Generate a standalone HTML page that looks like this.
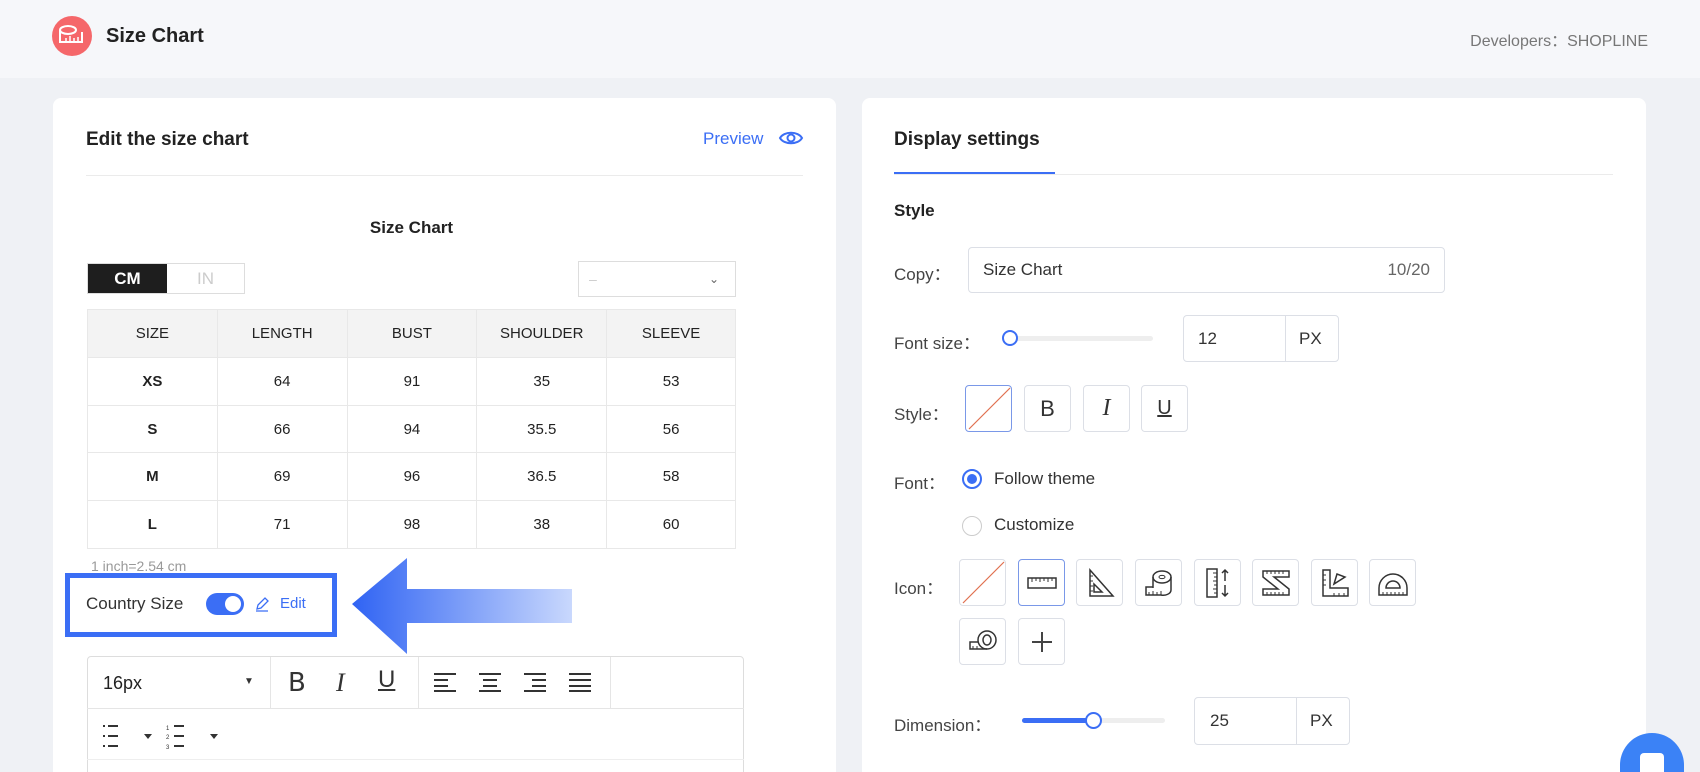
<!DOCTYPE html>
<html style="width:1700px;height:772px;overflow:hidden"><head><meta charset="utf-8"><style>
*{box-sizing:border-box;margin:0;padding:0}
body{width:1700px;height:772px;overflow:hidden;background:#eff1f5;font-family:"Liberation Sans",sans-serif;color:#333;position:relative}
.a{position:absolute}
.hdr{left:0;top:0;width:1700px;height:78px;background:#f6f7fa}
.card{background:#fff;border-radius:8px 8px 0 0}
.lbl{font-size:17px;color:#444}
.box{border:1px solid #dcdfe6;border-radius:4px;background:#fff}
td,th{border:1px solid #e8e8e8;text-align:center;font-size:15px;color:#222}
th{background:#f3f3f3;font-weight:normal;height:48px}
td{height:47.7px}
table{border-collapse:collapse}
.ib{width:47px;height:47px;border:1px solid #dcdfe6;border-radius:4px;background:#fff;display:flex;align-items:center;justify-content:center}
</style></head><body>
<div class="a hdr"></div>
<svg class="a" style="left:52px;top:16px" width="40" height="40" viewBox="0 0 40 40"><circle cx="20" cy="20" r="20" fill="#f5676a"/><ellipse cx="16" cy="14" rx="8" ry="4" fill="none" stroke="#fff" stroke-width="2"/><path d="M8 14v12h22v-10" fill="none" stroke="#fff" stroke-width="2"/><path d="M14 26v-4M18 26v-6M22 26v-4M26 26v-5" stroke="#fff" stroke-width="1.5"/></svg>
<div class="a" style="left:106px;top:25px;font-size:20px;font-weight:bold;color:#222">Size Chart</div>
<div class="a" style="right:52px;top:27px;font-size:16px;color:#777">Developers：SHOPLINE</div>

<div class="a card" style="left:53px;top:98px;width:783px;height:674px"></div>
<div class="a card" style="left:862px;top:98px;width:784px;height:674px"></div>

<div class="a" style="left:86px;top:129px;font-size:19px;font-weight:bold;color:#222">Edit the size chart</div>
<div class="a" style="left:703px;top:129px;font-size:17px;color:#3b6ef5">Preview</div>
<svg class="a" style="left:778px;top:127px" width="26" height="22" viewBox="0 0 26 22"><path d="M2 11C6 4 20 4 24 11C20 18 6 18 2 11Z" fill="none" stroke="#3b6ef5" stroke-width="2"/><circle cx="13" cy="11" r="3.5" fill="none" stroke="#3b6ef5" stroke-width="2"/></svg>
<div class="a" style="left:86px;top:175px;width:717px;height:1px;background:#ebebeb"></div>
<div class="a" style="left:87px;top:218px;width:649px;text-align:center;font-size:17px;font-weight:bold;color:#222">Size Chart</div>
<div class="a" style="left:87px;top:263px;width:158px;height:31px;border:1px solid #ddd;display:flex;font-size:17px">
<div style="width:79px;background:#1e1e1e;color:#fff;font-weight:bold;text-align:center;line-height:29px">CM</div>
<div style="flex:1;color:#ccc;text-align:center;line-height:29px">IN</div></div>
<div class="a" style="left:578px;top:261px;width:158px;height:36px;border:1px solid #ddd;color:#ccc;font-size:14px;line-height:34px;padding-left:10px">–<span style="position:absolute;right:16px;color:#666;font-size:12px">&#8964;</span></div>
<table class="a" style="left:87px;top:309px;width:649px">
<colgroup><col style="width:130px"><col style="width:130px"><col style="width:130px"><col style="width:130px"><col style="width:129px"></colgroup>
<tr><th>SIZE</th><th>LENGTH</th><th>BUST</th><th>SHOULDER</th><th>SLEEVE</th></tr>
<tr><td><b>XS</b></td><td>64</td><td>91</td><td>35</td><td>53</td></tr>
<tr><td><b>S</b></td><td>66</td><td>94</td><td>35.5</td><td>56</td></tr>
<tr><td><b>M</b></td><td>69</td><td>96</td><td>36.5</td><td>58</td></tr>
<tr><td><b>L</b></td><td>71</td><td>98</td><td>38</td><td>60</td></tr>
</table>
<div class="a" style="left:91px;top:558px;font-size:14px;color:#999">1 inch=2.54 cm</div>
<div class="a" style="left:65px;top:573px;width:272px;height:64px;border:5px solid #3b6ef5;background:#fff"></div>
<div class="a lbl" style="left:86px;top:594px;color:#333">Country Size</div>
<div class="a" style="left:206px;top:593px;width:38px;height:22px;border-radius:11px;background:#3b6ef5"><div style="position:absolute;right:3px;top:3px;width:16px;height:16px;border-radius:50%;background:#fff"></div></div>
<svg class="a" style="left:254px;top:596px" width="16" height="16" viewBox="0 0 16 16"><path d="M3 13L4 9L11 2L14 5L7 12Z M2 15H14" fill="none" stroke="#3b6ef5" stroke-width="1.3"/></svg>
<div class="a" style="left:280px;top:595px;font-size:15px;color:#3b6ef5">Edit</div>
<svg class="a" style="left:350px;top:556px" width="224" height="100" viewBox="0 0 224 100"><defs><linearGradient id="g" x1="0" x2="1"><stop offset="0" stop-color="#2f63f3"/><stop offset="1" stop-color="#c9d8fd"/></linearGradient></defs><path d="M2 48L57 2V33H222V67H57V98Z" fill="url(#g)"/></svg>

<div class="a" style="left:87px;top:656px;width:657px;height:130px;border:1px solid #ddd;border-radius:4px"></div>
<div class="a" style="left:87px;top:708px;width:657px;height:1px;background:#e5e5e5"></div>
<div class="a" style="left:87px;top:759px;width:657px;height:1px;background:#eee"></div>
<div class="a" style="left:270px;top:657px;width:1px;height:51px;background:#e5e5e5"></div>
<div class="a" style="left:418px;top:657px;width:1px;height:51px;background:#e5e5e5"></div>
<div class="a" style="left:610px;top:657px;width:1px;height:51px;background:#e5e5e5"></div>
<div class="a" style="left:103px;top:673px;font-size:18px;color:#222">16px</div>
<div class="a" style="left:244px;top:676px;font-size:10px;color:#333">▼</div>
<div class="a" style="left:288px;top:668px;font-size:26px;color:#333;font-family:'DejaVu Sans',sans-serif">B</div>
<div class="a" style="left:336px;top:668px;font-size:26px;color:#333;font-family:'Liberation Serif',serif;font-style:italic">I</div>
<div class="a" style="left:378px;top:666px;font-size:24px;color:#333;text-decoration:underline">U</div>
<svg class="a" style="left:434px;top:672px" width="170" height="20" viewBox="0 0 170 20"><g stroke="#333" stroke-width="2"><path d="M0 2h22M0 8h14M0 14h14M0 19h22"/><path d="M45 2h22M49 8h14M49 14h14M45 19h22"/><path d="M90 2h22M98 8h14M98 14h14M90 19h22"/><path d="M135 2h22M135 8h22M135 14h22M135 19h22"/></g></svg>
<svg class="a" style="left:102px;top:724px" width="130" height="26" viewBox="0 0 130 26"><g stroke="#333" stroke-width="2"><path d="M6 2h10M6 12h10M6 22h10M1 2h2M1 12h2M1 22h2"/><path d="M72 2h10M72 12h10M72 22h10"/></g><path d="M42 10l4 5 4-5Z M108 10l4 5 4-5Z" fill="#333"/><text x="64" y="6" font-size="6" fill="#333">1</text><text x="64" y="15" font-size="6" fill="#333">2</text><text x="64" y="25" font-size="6" fill="#333">3</text></svg>

<!-- right -->
<div class="a" style="left:894px;top:129px;font-size:19px;font-weight:bold;color:#222">Display settings</div>
<div class="a" style="left:894px;top:174px;width:719px;height:1px;background:#ebebeb"></div>
<div class="a" style="left:894px;top:172px;width:161px;height:2px;background:#3b6ef5"></div>
<div class="a" style="left:894px;top:201px;font-size:17px;font-weight:bold;color:#222">Style</div>
<div class="a lbl" style="left:894px;top:260px">Copy：</div>
<div class="a box" style="left:968px;top:247px;width:477px;height:46px"></div>
<div class="a" style="left:983px;top:260px;font-size:17px;color:#333">Size Chart</div>
<div class="a" style="left:1370px;top:260px;width:60px;text-align:right;font-size:17px;color:#666">10/20</div>
<div class="a lbl" style="left:894px;top:329px">Font size：</div>
<div class="a" style="left:1003px;top:336px;width:150px;height:5px;border-radius:3px;background:#eee"></div>
<div class="a" style="left:1002px;top:330px;width:16px;height:16px;border-radius:50%;border:2px solid #3b6ef5;background:#fff"></div>
<div class="a box" style="left:1183px;top:315px;width:156px;height:47px"></div>
<div class="a" style="left:1285px;top:316px;width:1px;height:45px;background:#dcdfe6"></div>
<div class="a" style="left:1198px;top:329px;font-size:17px">12</div>
<div class="a" style="left:1299px;top:329px;font-size:17px">PX</div>
<div class="a lbl" style="left:894px;top:400px">Style：</div>
<div class="a ib" style="left:965px;top:385px;border-color:#7a98e8;overflow:hidden"><svg width="47" height="47"><path d="M3 44L44 3" stroke="#e07050" stroke-width="1.2"/></svg></div>
<div class="a ib" style="left:1024px;top:385px;font-size:22px;color:#333">B</div>
<div class="a ib" style="left:1083px;top:385px;font-size:24px;color:#333;font-family:'Liberation Serif',serif;font-style:italic">I</div>
<div class="a ib" style="left:1141px;top:385px;font-size:20px;color:#333;text-decoration:underline">U</div>
<div class="a lbl" style="left:894px;top:469px">Font：</div>
<div class="a" style="left:962px;top:469px;width:20px;height:20px;border-radius:50%;border:2px solid #3b6ef5"><div style="margin:3px;width:10px;height:10px;border-radius:50%;background:#3b6ef5"></div></div>
<div class="a" style="left:994px;top:469px;font-size:17px">Follow theme</div>
<div class="a" style="left:962px;top:516px;width:20px;height:20px;border-radius:50%;border:1px solid #ccc"></div>
<div class="a" style="left:994px;top:515px;font-size:17px">Customize</div>
<div class="a lbl" style="left:894px;top:574px">Icon：</div>
<div class="a ib" style="left:959px;top:559px;overflow:hidden"><svg width="47" height="47"><path d="M3 44L44 3" stroke="#e07050" stroke-width="1.2"/></svg></div>
<div class="a ib" style="left:1018px;top:559px;border-color:#7a98e8"><svg width="30" height="14"><rect x="1" y="2" width="28" height="10" fill="none" stroke="#333" stroke-width="1.5"/><path d="M5 2v4M9 2v3M13 2v4M17 2v3M21 2v4M25 2v3" stroke="#333"/></svg></div>
<div class="a ib" style="left:1076px;top:559px"><svg width="30" height="30"><path d="M5 2V28H28Z M9 16V24H17Z" fill="none" stroke="#333" stroke-width="1.5"/><path d="M5 8h3M5 13h3M5 18h3M5 23h3" stroke="#333"/></svg></div>
<div class="a ib" style="left:1135px;top:559px"><svg width="32" height="30"><ellipse cx="19" cy="9" rx="9" ry="6" fill="none" stroke="#333" stroke-width="1.5"/><ellipse cx="19" cy="9" rx="3" ry="1.6" fill="none" stroke="#333"/><path d="M10 9V20M28 9V22C28 26 22 28 18 27H3V19H10" fill="none" stroke="#333" stroke-width="1.5"/><path d="M6 27v-3M10 27v-4M14 27v-3M18 27v-4" stroke="#333"/></svg></div>
<div class="a ib" style="left:1194px;top:559px"><svg width="30" height="32"><rect x="4" y="2" width="10" height="28" fill="none" stroke="#333" stroke-width="1.5"/><path d="M10 6h4M11 10h3M10 14h4M11 18h3M10 22h4M11 26h3" stroke="#333"/><path d="M22 3V14M19 6l3-3 3 3M22 18V29M19 26l3 3 3-3" fill="none" stroke="#333" stroke-width="1.5"/></svg></div>
<div class="a ib" style="left:1252px;top:559px"><svg width="32" height="30"><path d="M3 3H29V9H14L29 21V27H3V21H18L3 9Z" fill="none" stroke="#333" stroke-width="1.5"/><path d="M7 3v3M11 3v3M15 3v3M19 3v3M23 3v3M7 27v-3M11 27v-3M15 27v-3M19 27v-3M23 27v-3" stroke="#333"/></svg></div>
<div class="a ib" style="left:1311px;top:559px"><svg width="32" height="30"><path d="M4 2H11V20H29V28H4Z" fill="none" stroke="#333" stroke-width="1.5"/><path d="M4 7h3M4 12h3M4 17h3M15 28v-3M20 28v-3M25 28v-3" stroke="#333"/><path d="M15 16L18 6L26 9Z" fill="none" stroke="#333" stroke-width="1.5"/></svg></div>
<div class="a ib" style="left:1369px;top:559px"><svg width="32" height="30"><path d="M2 20A14 14 0 0 1 30 20V27H2Z M9 20A7 7 0 0 1 23 20Z" fill="none" stroke="#333" stroke-width="1.5"/><path d="M6 27v-3M10 27v-3M14 27v-3M18 27v-3M22 27v-3M26 27v-3" stroke="#333"/></svg></div>
<div class="a ib" style="left:959px;top:618px"><svg width="32" height="30"><circle cx="20" cy="13" r="9" fill="none" stroke="#333" stroke-width="1.5"/><ellipse cx="20" cy="13" rx="4" ry="5" fill="none" stroke="#333" stroke-width="1.5"/><path d="M20 22H3V15H11" fill="none" stroke="#333" stroke-width="1.5"/><path d="M6 22v-3M10 22v-3" stroke="#333"/></svg></div>
<div class="a ib" style="left:1018px;top:618px"><svg width="24" height="24"><path d="M12 2V22M2 12H22" stroke="#444" stroke-width="2"/></svg></div>
<div class="a lbl" style="left:894px;top:711px">Dimension：</div>
<div class="a" style="left:1022px;top:718px;width:143px;height:5px;border-radius:3px;background:#eee"></div>
<div class="a" style="left:1022px;top:718px;width:72px;height:5px;border-radius:3px;background:#3b6ef5"></div>
<div class="a" style="left:1085px;top:712px;width:17px;height:17px;border-radius:50%;border:2px solid #3b6ef5;background:#fff"></div>
<div class="a box" style="left:1194px;top:697px;width:156px;height:48px"></div>
<div class="a" style="left:1296px;top:698px;width:1px;height:46px;background:#dcdfe6"></div>
<div class="a" style="left:1210px;top:711px;font-size:17px">25</div>
<div class="a" style="left:1310px;top:711px;font-size:17px">PX</div>
<div class="a" style="left:1620px;top:733px;width:64px;height:39px;border-radius:32px 32px 0 0;background:#3b82f6;overflow:hidden"><div style="position:absolute;left:20px;top:20px;width:24px;height:30px;border-radius:4px;background:#fff"></div></div>
</body></html>
